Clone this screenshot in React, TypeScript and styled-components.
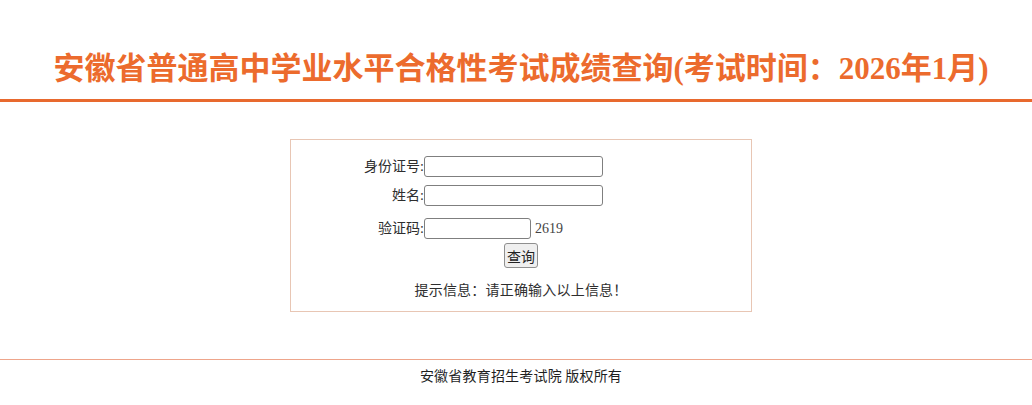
import React from 'react';
import styled, { createGlobalStyle } from 'styled-components';

const GlobalStyle = createGlobalStyle`
    html, body {
        margin: 0;
        padding: 0;
        background: #ffffff;
    }
    body {
        font-family: "Liberation Serif", "Noto Sans CJK SC", serif;
        font-size: 14px;
        color: #333333;
    }
`

const Header = styled.div`
    border-bottom: 3px solid #e8692e;
    padding: 46px 0 8px 10px;
    text-align: center;
`

const Title = styled.h1`
    margin: 0;
    font-family: "Liberation Serif", "Noto Sans CJK SC", serif;
    font-size: 31px;
    font-weight: bold;
    line-height: 45px;
    color: #ec6b2d;
`

const Main = styled.div`
    display: flex;
    justify-content: center;
    padding: 37px 0 47px 10px;
`

const QueryBox = styled.div`
    width: 462px;
    box-sizing: border-box;
    border: 1px solid #e8c6b4;
    padding: 16px 0 10px 0;
`

const FieldRow = styled.div<{ $gap?: number }>`
    display: grid;
    grid-template-columns: 133px auto;
    align-items: center;
    margin-bottom: ${(p) => (p.$gap ?? 8)}px;
`

const Label = styled.label`
    text-align: right;
    font-size: 14px;
    line-height: 21px;
    color: #2e2e2e;
`

const InputWrap = styled.div`
    display: flex;
    align-items: center;
    gap: 4px;
`

const TextInput = styled.input<{ $w: number }>`
    box-sizing: border-box;
    width: ${(p) => p.$w}px;
    height: 21px;
    margin: 0;
    padding: 1px 2px;
    border: 1px solid #7f7f7f;
    border-radius: 3px;
    background: #fff;
    font-size: 13px;
`

const Code = styled.span`
    font-family: "Liberation Serif", serif;
    font-size: 14px;
    color: #444444;
`

const ButtonRow = styled.div`
    display: flex;
    justify-content: center;
    margin-top: 4px;
`

const SubmitButton = styled.button`
    box-sizing: border-box;
    height: 25px;
    padding: 0 2px;
    margin: 0;
    font-family: "Noto Sans CJK SC", sans-serif;
    font-size: 14px;
    color: #222;
    background: #efefef;
    border: 1px solid #8f8f8f;
    border-radius: 3px;
`

const Hint = styled.p`
    margin: 12px 0 0 0;
    text-align: center;
    font-size: 14px;
    letter-spacing: 0.2px;
    line-height: 21px;
    color: #2e2e2e;
`

const Footer = styled.div`
    border-top: 1px solid #eea58b;
    padding: 5px 0 0 10px;
    text-align: center;
    font-family: "Noto Sans CJK SC", sans-serif;
    font-size: 14px;
    letter-spacing: 0.2px;
    line-height: 20px;
    color: #1f1f1f;
`

const App: React.FC = () => {
    return (
        <>
            <GlobalStyle />
            <Header>
                <Title>安徽省普通高中学业水平合格性考试成绩查询(考试时间：2026年1月)</Title>
            </Header>
            <Main>
                <QueryBox>
                    <FieldRow>
                        <Label>身份证号:</Label>
                        <InputWrap>
                            <TextInput $w={179} type="text" />
                        </InputWrap>
                    </FieldRow>
                    <FieldRow $gap={12}>
                        <Label>姓名:</Label>
                        <InputWrap>
                            <TextInput $w={179} type="text" />
                        </InputWrap>
                    </FieldRow>
                    <FieldRow $gap={0}>
                        <Label>验证码:</Label>
                        <InputWrap>
                            <TextInput $w={107} type="text" />
                            <Code>2619</Code>
                        </InputWrap>
                    </FieldRow>
                    <ButtonRow>
                        <SubmitButton type="button">查询</SubmitButton>
                    </ButtonRow>
                    <Hint>提示信息：请正确输入以上信息！</Hint>
                </QueryBox>
            </Main>
            <Footer>安徽省教育招生考试院 版权所有</Footer>
        </>
    )
}

export default App;
